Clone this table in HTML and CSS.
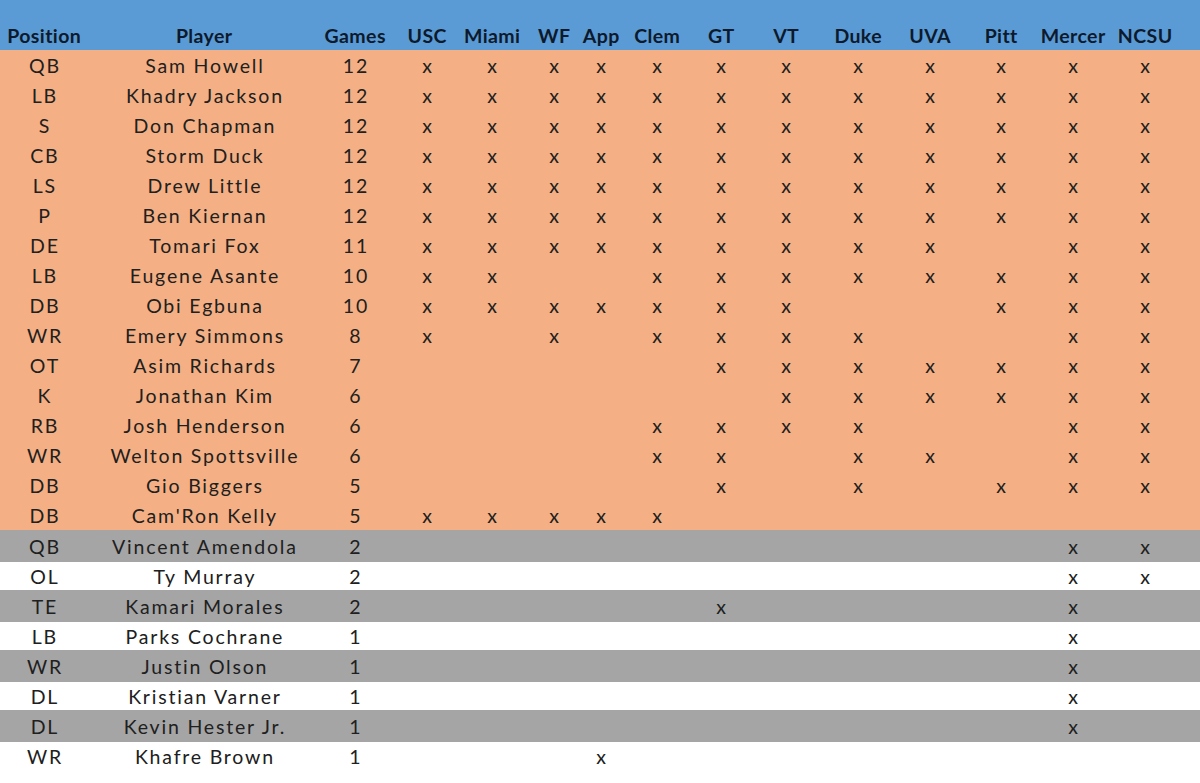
FILE: index.html
```html
<!DOCTYPE html>
<html>
<head>
<meta charset="utf-8">
<link rel="stylesheet" href="styles.css">
</head>
<body>
<div class="sheet">
  <div class="row head">
    <span>Position</span><span>Player</span><span>Games</span><span>USC</span><span>Miami</span><span>WF</span><span>App</span><span>Clem</span><span>GT</span><span>VT</span><span>Duke</span><span>UVA</span><span>Pitt</span><span>Mercer</span><span>NCSU</span>
  </div>
  <div class="row orange"><span>QB</span><span>Sam Howell</span><span>12</span><span>x</span><span>x</span><span>x</span><span>x</span><span>x</span><span>x</span><span>x</span><span>x</span><span>x</span><span>x</span><span>x</span><span>x</span></div>
  <div class="row orange"><span>LB</span><span>Khadry Jackson</span><span>12</span><span>x</span><span>x</span><span>x</span><span>x</span><span>x</span><span>x</span><span>x</span><span>x</span><span>x</span><span>x</span><span>x</span><span>x</span></div>
  <div class="row orange"><span>S</span><span>Don Chapman</span><span>12</span><span>x</span><span>x</span><span>x</span><span>x</span><span>x</span><span>x</span><span>x</span><span>x</span><span>x</span><span>x</span><span>x</span><span>x</span></div>
  <div class="row orange"><span>CB</span><span>Storm Duck</span><span>12</span><span>x</span><span>x</span><span>x</span><span>x</span><span>x</span><span>x</span><span>x</span><span>x</span><span>x</span><span>x</span><span>x</span><span>x</span></div>
  <div class="row orange"><span>LS</span><span>Drew Little</span><span>12</span><span>x</span><span>x</span><span>x</span><span>x</span><span>x</span><span>x</span><span>x</span><span>x</span><span>x</span><span>x</span><span>x</span><span>x</span></div>
  <div class="row orange"><span>P</span><span>Ben Kiernan</span><span>12</span><span>x</span><span>x</span><span>x</span><span>x</span><span>x</span><span>x</span><span>x</span><span>x</span><span>x</span><span>x</span><span>x</span><span>x</span></div>
  <div class="row orange"><span>DE</span><span>Tomari Fox</span><span>11</span><span>x</span><span>x</span><span>x</span><span>x</span><span>x</span><span>x</span><span>x</span><span>x</span><span>x</span><span></span><span>x</span><span>x</span></div>
  <div class="row orange"><span>LB</span><span>Eugene Asante</span><span>10</span><span>x</span><span>x</span><span></span><span></span><span>x</span><span>x</span><span>x</span><span>x</span><span>x</span><span>x</span><span>x</span><span>x</span></div>
  <div class="row orange"><span>DB</span><span>Obi Egbuna</span><span>10</span><span>x</span><span>x</span><span>x</span><span>x</span><span>x</span><span>x</span><span>x</span><span></span><span></span><span>x</span><span>x</span><span>x</span></div>
  <div class="row orange"><span>WR</span><span>Emery Simmons</span><span>8</span><span>x</span><span></span><span>x</span><span></span><span>x</span><span>x</span><span>x</span><span>x</span><span></span><span></span><span>x</span><span>x</span></div>
  <div class="row orange"><span>OT</span><span>Asim Richards</span><span>7</span><span></span><span></span><span></span><span></span><span></span><span>x</span><span>x</span><span>x</span><span>x</span><span>x</span><span>x</span><span>x</span></div>
  <div class="row orange"><span>K</span><span>Jonathan Kim</span><span>6</span><span></span><span></span><span></span><span></span><span></span><span></span><span>x</span><span>x</span><span>x</span><span>x</span><span>x</span><span>x</span></div>
  <div class="row orange"><span>RB</span><span>Josh Henderson</span><span>6</span><span></span><span></span><span></span><span></span><span>x</span><span>x</span><span>x</span><span>x</span><span></span><span></span><span>x</span><span>x</span></div>
  <div class="row orange"><span>WR</span><span>Welton Spottsville</span><span>6</span><span></span><span></span><span></span><span></span><span>x</span><span>x</span><span></span><span>x</span><span>x</span><span></span><span>x</span><span>x</span></div>
  <div class="row orange"><span>DB</span><span>Gio Biggers</span><span>5</span><span></span><span></span><span></span><span></span><span></span><span>x</span><span></span><span>x</span><span></span><span>x</span><span>x</span><span>x</span></div>
  <div class="row orange"><span>DB</span><span>Cam'Ron Kelly</span><span>5</span><span>x</span><span>x</span><span>x</span><span>x</span><span>x</span><span></span><span></span><span></span><span></span><span></span><span></span><span></span></div>
  <div class="row gray"><span>QB</span><span>Vincent Amendola</span><span>2</span><span></span><span></span><span></span><span></span><span></span><span></span><span></span><span></span><span></span><span></span><span>x</span><span>x</span></div>
  <div class="row white"><span>OL</span><span>Ty Murray</span><span>2</span><span></span><span></span><span></span><span></span><span></span><span></span><span></span><span></span><span></span><span></span><span>x</span><span>x</span></div>
  <div class="row gray"><span>TE</span><span>Kamari Morales</span><span>2</span><span></span><span></span><span></span><span></span><span></span><span>x</span><span></span><span></span><span></span><span></span><span>x</span><span></span></div>
  <div class="row white"><span>LB</span><span>Parks Cochrane</span><span>1</span><span></span><span></span><span></span><span></span><span></span><span></span><span></span><span></span><span></span><span></span><span>x</span><span></span></div>
  <div class="row gray"><span>WR</span><span>Justin Olson</span><span>1</span><span></span><span></span><span></span><span></span><span></span><span></span><span></span><span></span><span></span><span></span><span>x</span><span></span></div>
  <div class="row white"><span>DL</span><span>Kristian Varner</span><span>1</span><span></span><span></span><span></span><span></span><span></span><span></span><span></span><span></span><span></span><span></span><span>x</span><span></span></div>
  <div class="row gray"><span>DL</span><span>Kevin Hester Jr.</span><span>1</span><span></span><span></span><span></span><span></span><span></span><span></span><span></span><span></span><span></span><span></span><span>x</span><span></span></div>
  <div class="row white"><span>WR</span><span>Khafre Brown</span><span>1</span><span></span><span></span><span></span><span>x</span><span></span><span></span><span></span><span></span><span></span><span></span><span></span><span></span></div>
</div>
</body>
</html>
```
FILE: styles.css
```css
html, body {
  margin: 0;
  padding: 0;
  background: #ffffff;
}

.sheet {
  width: 1200px;
  font-family: Lato, "Liberation Sans", sans-serif;
  font-size: 19.5px;
  color: #202020;
}

.row {
  display: grid;
  grid-template-columns: 88px 232px 70px 74px 56px 68px 26px 86px 42px 88px 56px 88px 54px 90px 54px 1fr;
  height: 30px;
}

.row > span {
  display: flex;
  justify-content: center;
  align-items: center;
  white-space: nowrap;
  letter-spacing: 1.8px;
  text-indent: 1.8px;
}

.head {
  height: 50px;
  background: #5b9bd5;
  color: #0c1a2c;
  font-weight: 700;
}

.head > span {
  align-items: flex-end;
  padding-bottom: 3px;
  letter-spacing: 0.4px;
  text-indent: 0.4px;
}

.orange {
  background: #f4b084;
}

.gray {
  background: #a5a5a5;
  height: 32px;
}

.white {
  background: #ffffff;
  height: 28px;
}
```
